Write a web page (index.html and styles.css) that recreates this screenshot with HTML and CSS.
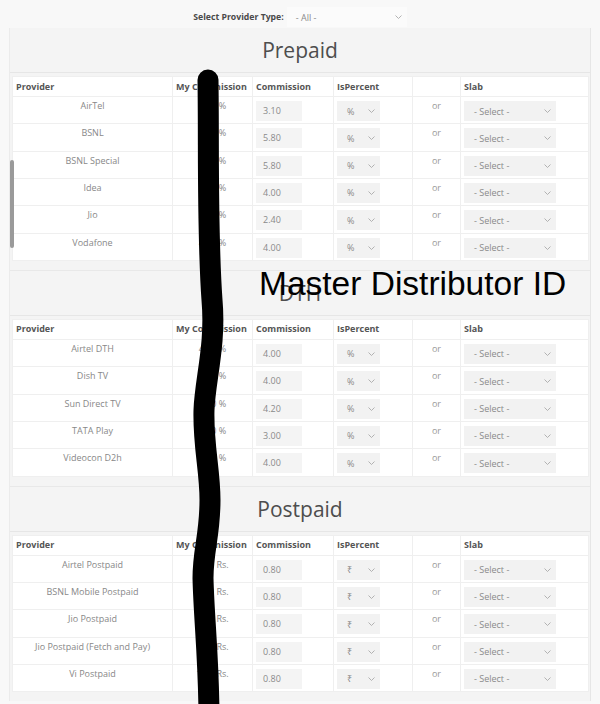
FILE: index.html
```html
<!DOCTYPE html>
<html>
<head>
<meta charset="utf-8">
<link rel="stylesheet" href="styles.css">
</head>
<body>
<div class="topbar">
  <span class="top-label">Select Provider Type:</span>
  <div class="sel top-sel"><span>- All -</span><svg class="chev" viewBox="0 0 7 4"><polyline points="0.5,0.5 3.5,3.5 6.5,0.5"/></svg></div>
</div>

<div class="panel">
  <section class="sec">
    <div class="sec-head">Prepaid</div>
    <div class="sec-body">
      <table class="grid">
        <colgroup><col class="c1"><col class="c2"><col class="c3"><col class="c4"><col class="c5"><col class="c6"></colgroup>
        <tr class="hr"><th>Provider</th><th>My Commission</th><th>Commission</th><th>IsPercent</th><th></th><th>Slab</th></tr>
        <tr><td class="name">AirTel</td><td class="my">3.50 %</td><td class="in"><div class="inp">3.10</div></td><td class="in"><div class="sel pct"><span>%</span><svg class="chev" viewBox="0 0 7 4"><polyline points="0.5,0.5 3.5,3.5 6.5,0.5"/></svg></div></td><td class="or">or</td><td class="in"><div class="sel slab"><span>- Select -</span><svg class="chev" viewBox="0 0 7 4"><polyline points="0.5,0.5 3.5,3.5 6.5,0.5"/></svg></div></td></tr>
        <tr><td class="name">BSNL</td><td class="my">6.20 %</td><td class="in"><div class="inp">5.80</div></td><td class="in"><div class="sel pct"><span>%</span><svg class="chev" viewBox="0 0 7 4"><polyline points="0.5,0.5 3.5,3.5 6.5,0.5"/></svg></div></td><td class="or">or</td><td class="in"><div class="sel slab"><span>- Select -</span><svg class="chev" viewBox="0 0 7 4"><polyline points="0.5,0.5 3.5,3.5 6.5,0.5"/></svg></div></td></tr>
        <tr><td class="name">BSNL Special</td><td class="my">6.20 %</td><td class="in"><div class="inp">5.80</div></td><td class="in"><div class="sel pct"><span>%</span><svg class="chev" viewBox="0 0 7 4"><polyline points="0.5,0.5 3.5,3.5 6.5,0.5"/></svg></div></td><td class="or">or</td><td class="in"><div class="sel slab"><span>- Select -</span><svg class="chev" viewBox="0 0 7 4"><polyline points="0.5,0.5 3.5,3.5 6.5,0.5"/></svg></div></td></tr>
        <tr><td class="name">Idea</td><td class="my">4.40 %</td><td class="in"><div class="inp">4.00</div></td><td class="in"><div class="sel pct"><span>%</span><svg class="chev" viewBox="0 0 7 4"><polyline points="0.5,0.5 3.5,3.5 6.5,0.5"/></svg></div></td><td class="or">or</td><td class="in"><div class="sel slab"><span>- Select -</span><svg class="chev" viewBox="0 0 7 4"><polyline points="0.5,0.5 3.5,3.5 6.5,0.5"/></svg></div></td></tr>
        <tr><td class="name">Jio</td><td class="my">2.80 %</td><td class="in"><div class="inp">2.40</div></td><td class="in"><div class="sel pct"><span>%</span><svg class="chev" viewBox="0 0 7 4"><polyline points="0.5,0.5 3.5,3.5 6.5,0.5"/></svg></div></td><td class="or">or</td><td class="in"><div class="sel slab"><span>- Select -</span><svg class="chev" viewBox="0 0 7 4"><polyline points="0.5,0.5 3.5,3.5 6.5,0.5"/></svg></div></td></tr>
        <tr><td class="name">Vodafone</td><td class="my">4.40 %</td><td class="in"><div class="inp">4.00</div></td><td class="in"><div class="sel pct"><span>%</span><svg class="chev" viewBox="0 0 7 4"><polyline points="0.5,0.5 3.5,3.5 6.5,0.5"/></svg></div></td><td class="or">or</td><td class="in"><div class="sel slab"><span>- Select -</span><svg class="chev" viewBox="0 0 7 4"><polyline points="0.5,0.5 3.5,3.5 6.5,0.5"/></svg></div></td></tr>
      </table>
    </div>
  </section>

  <section class="sec">
    <div class="sec-head">DTH</div>
    <div class="sec-body">
      <table class="grid">
        <colgroup><col class="c1"><col class="c2"><col class="c3"><col class="c4"><col class="c5"><col class="c6"></colgroup>
        <tr class="hr"><th>Provider</th><th>My Commission</th><th>Commission</th><th>IsPercent</th><th></th><th>Slab</th></tr>
        <tr><td class="name">Airtel DTH</td><td class="my">4.40 %</td><td class="in"><div class="inp">4.00</div></td><td class="in"><div class="sel pct"><span>%</span><svg class="chev" viewBox="0 0 7 4"><polyline points="0.5,0.5 3.5,3.5 6.5,0.5"/></svg></div></td><td class="or">or</td><td class="in"><div class="sel slab"><span>- Select -</span><svg class="chev" viewBox="0 0 7 4"><polyline points="0.5,0.5 3.5,3.5 6.5,0.5"/></svg></div></td></tr>
        <tr><td class="name">Dish TV</td><td class="my">4.40 %</td><td class="in"><div class="inp">4.00</div></td><td class="in"><div class="sel pct"><span>%</span><svg class="chev" viewBox="0 0 7 4"><polyline points="0.5,0.5 3.5,3.5 6.5,0.5"/></svg></div></td><td class="or">or</td><td class="in"><div class="sel slab"><span>- Select -</span><svg class="chev" viewBox="0 0 7 4"><polyline points="0.5,0.5 3.5,3.5 6.5,0.5"/></svg></div></td></tr>
        <tr><td class="name">Sun Direct TV</td><td class="my">4.60 %</td><td class="in"><div class="inp">4.20</div></td><td class="in"><div class="sel pct"><span>%</span><svg class="chev" viewBox="0 0 7 4"><polyline points="0.5,0.5 3.5,3.5 6.5,0.5"/></svg></div></td><td class="or">or</td><td class="in"><div class="sel slab"><span>- Select -</span><svg class="chev" viewBox="0 0 7 4"><polyline points="0.5,0.5 3.5,3.5 6.5,0.5"/></svg></div></td></tr>
        <tr><td class="name">TATA Play</td><td class="my">3.40 %</td><td class="in"><div class="inp">3.00</div></td><td class="in"><div class="sel pct"><span>%</span><svg class="chev" viewBox="0 0 7 4"><polyline points="0.5,0.5 3.5,3.5 6.5,0.5"/></svg></div></td><td class="or">or</td><td class="in"><div class="sel slab"><span>- Select -</span><svg class="chev" viewBox="0 0 7 4"><polyline points="0.5,0.5 3.5,3.5 6.5,0.5"/></svg></div></td></tr>
        <tr><td class="name">Videocon D2h</td><td class="my">4.40 %</td><td class="in"><div class="inp">4.00</div></td><td class="in"><div class="sel pct"><span>%</span><svg class="chev" viewBox="0 0 7 4"><polyline points="0.5,0.5 3.5,3.5 6.5,0.5"/></svg></div></td><td class="or">or</td><td class="in"><div class="sel slab"><span>- Select -</span><svg class="chev" viewBox="0 0 7 4"><polyline points="0.5,0.5 3.5,3.5 6.5,0.5"/></svg></div></td></tr>
      </table>
    </div>
  </section>

  <section class="sec">
    <div class="sec-head">Postpaid</div>
    <div class="sec-body">
      <table class="grid">
        <colgroup><col class="c1"><col class="c2"><col class="c3"><col class="c4"><col class="c5"><col class="c6"></colgroup>
        <tr class="hr"><th>Provider</th><th>My Commission</th><th>Commission</th><th>IsPercent</th><th></th><th>Slab</th></tr>
        <tr><td class="name">Airtel Postpaid</td><td class="my">1.00 Rs.</td><td class="in"><div class="inp">0.80</div></td><td class="in"><div class="sel pct"><span>₹</span><svg class="chev" viewBox="0 0 7 4"><polyline points="0.5,0.5 3.5,3.5 6.5,0.5"/></svg></div></td><td class="or">or</td><td class="in"><div class="sel slab"><span>- Select -</span><svg class="chev" viewBox="0 0 7 4"><polyline points="0.5,0.5 3.5,3.5 6.5,0.5"/></svg></div></td></tr>
        <tr><td class="name">BSNL Mobile Postpaid</td><td class="my">1.00 Rs.</td><td class="in"><div class="inp">0.80</div></td><td class="in"><div class="sel pct"><span>₹</span><svg class="chev" viewBox="0 0 7 4"><polyline points="0.5,0.5 3.5,3.5 6.5,0.5"/></svg></div></td><td class="or">or</td><td class="in"><div class="sel slab"><span>- Select -</span><svg class="chev" viewBox="0 0 7 4"><polyline points="0.5,0.5 3.5,3.5 6.5,0.5"/></svg></div></td></tr>
        <tr><td class="name">Jio Postpaid</td><td class="my">1.00 Rs.</td><td class="in"><div class="inp">0.80</div></td><td class="in"><div class="sel pct"><span>₹</span><svg class="chev" viewBox="0 0 7 4"><polyline points="0.5,0.5 3.5,3.5 6.5,0.5"/></svg></div></td><td class="or">or</td><td class="in"><div class="sel slab"><span>- Select -</span><svg class="chev" viewBox="0 0 7 4"><polyline points="0.5,0.5 3.5,3.5 6.5,0.5"/></svg></div></td></tr>
        <tr><td class="name">Jio Postpaid (Fetch and Pay)</td><td class="my">1.00 Rs.</td><td class="in"><div class="inp">0.80</div></td><td class="in"><div class="sel pct"><span>₹</span><svg class="chev" viewBox="0 0 7 4"><polyline points="0.5,0.5 3.5,3.5 6.5,0.5"/></svg></div></td><td class="or">or</td><td class="in"><div class="sel slab"><span>- Select -</span><svg class="chev" viewBox="0 0 7 4"><polyline points="0.5,0.5 3.5,3.5 6.5,0.5"/></svg></div></td></tr>
        <tr><td class="name">Vi Postpaid</td><td class="my">1.00 Rs.</td><td class="in"><div class="inp">0.80</div></td><td class="in"><div class="sel pct"><span>₹</span><svg class="chev" viewBox="0 0 7 4"><polyline points="0.5,0.5 3.5,3.5 6.5,0.5"/></svg></div></td><td class="or">or</td><td class="in"><div class="sel slab"><span>- Select -</span><svg class="chev" viewBox="0 0 7 4"><polyline points="0.5,0.5 3.5,3.5 6.5,0.5"/></svg></div></td></tr>
      </table>
    </div>
  </section>
</div>

<div class="scroll-thumb"></div>
<svg class="scribble" viewBox="0 0 600 704" width="600" height="704">
  <path d="M208,80 C209,150 207,230 212,300 C216,345 205,380 204,410 C203,445 210,470 210,500 C210,535 203,550 203,578 C204,620 209,660 209,720"/>
</svg>
<div class="stamp">Master Distributor ID</div>
</body>
</html>
```

FILE: styles.css
```css
html, body {
  margin: 0;
  padding: 0;
  background: #f8f8f8;
  font-family: "Open Sans", "Noto Sans", sans-serif;
  color: #888;
  overflow: hidden;
}

.topbar {
  height: 28px;
  display: flex;
  justify-content: center;
  align-items: center;
  gap: 3px;
  padding-top: 6px;
  box-sizing: border-box;
}

.top-label {
  font-size: 8.7px;
  font-weight: 700;
  color: #4a4a4a;
}

.sel {
  display: flex;
  align-items: center;
  justify-content: space-between;
  background: #f2f2f2;
  box-sizing: border-box;
  height: 20px;
  font-size: 9px;
  color: #8a8a8a;
}

.top-sel {
  width: 120px;
  background: #fbfbfb;
  padding: 0 5px 0 9px;
}

.chev {
  width: 7px;
  height: 4px;
  fill: none;
  stroke: #aaa;
  stroke-width: 0.9;
}

.panel {
  margin: 0 9px;
  background: #f4f4f4;
  border-left: 1px solid #ebebeb;
  border-right: 1px solid #e6e6e6;
}

.sec + .sec {
  border-top: 1px solid #e8e8e8;
}

.sec-head {
  height: 44px;
  border-bottom: 1px solid #e6e6e6;
  display: flex;
  align-items: center;
  justify-content: center;
  font-size: 21px;
  color: #4d4d4d;
}

.sec-body {
  padding: 3px 2px 9px 2px;
}

.grid {
  width: 576px;
  border-collapse: collapse;
  table-layout: fixed;
  background: #fff;
}

.c1 { width: 160px; }
.c2 { width: 80px; }
.c3 { width: 81px; }
.c4 { width: 79px; }
.c5 { width: 48px; }
.c6 { width: 128px; }

.grid tr {
  height: 27.33px;
}

.grid tr.hr {
  height: 20px;
}

.grid th, .grid td {
  border: 1px solid #efefef;
  padding: 0;
  vertical-align: top;
  box-sizing: border-box;
}

.hr th {
  text-align: left;
  font-size: 9px;
  line-height: 12px;
  font-weight: 700;
  color: #555;
  padding: 0 3px;
  vertical-align: middle;
  white-space: nowrap;
  overflow: hidden;
}

.name, .my, .or {
  text-align: center;
  font-size: 9px;
  line-height: 12px;
  padding-top: 3px !important;
  color: #888;
  white-space: nowrap;
}

.or {
  color: #999;
}

.in {
  padding: 4px 3px 0 3px !important;
}

.inp {
  width: 46px;
  height: 20px;
  background: #f4f4f4;
  font-size: 9px;
  line-height: 20px;
  padding-left: 7px;
  box-sizing: border-box;
  color: #8a8a8a;
}

.pct {
  width: 43px;
  padding: 0 5px 0 10px;
}

.slab {
  width: 92px;
  padding: 0 5px 0 10px;
}

.scroll-thumb {
  position: absolute;
  left: 10px;
  top: 160px;
  width: 4px;
  height: 88px;
  background: #9a9a9a;
  border-radius: 2px;
}

.scribble {
  position: absolute;
  left: 0;
  top: 0;
  pointer-events: none;
}

.scribble path {
  fill: none;
  stroke: #000;
  stroke-width: 21;
  stroke-linecap: round;
  stroke-linejoin: round;
}

.stamp {
  position: absolute;
  left: 259px;
  top: 267px;
  font-family: "Liberation Sans", Arial, sans-serif;
  font-size: 33.5px;
  line-height: 34px;
  color: #000;
  white-space: nowrap;
}
```
